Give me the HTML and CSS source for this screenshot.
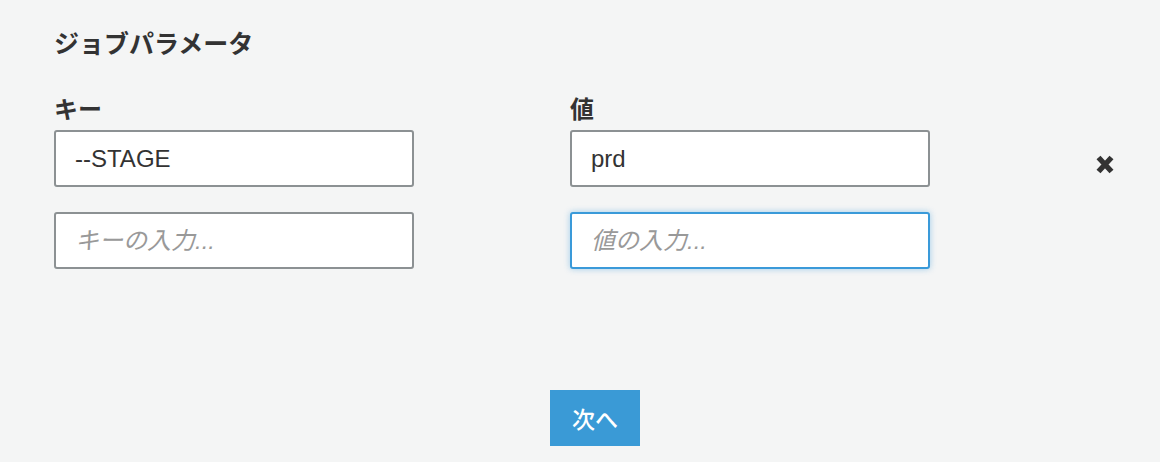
FILE: index.html
```html
<!DOCTYPE html>
<html lang="ja">
  <head>
    <meta charset="UTF-8" />
    <meta name="viewport" content="width=device-width, initial-scale=1.0" />
    <title>ジョブパラメータ</title>
    <link rel="stylesheet" href="styles.css">
  </head>
  <body>
    <main class="page">
      <h2 class="title">ジョブパラメータ</h2>

      <!-- パラメータ -->
      <section class="params">
        <label class="label">キー</label>
        <label class="label">値</label>
        <span></span>

        <input class="field" type="text" value="--STAGE" />
        <input class="field" type="text" value="prd" />
        <button class="remove" type="button" aria-label="削除">
          <svg width="18" height="19" viewBox="0 0 18 19">
            <path d="M2.5 2.5 L15.5 16.5 M15.5 2.5 L2.5 16.5" stroke="#333" stroke-width="5.4" fill="none" />
          </svg>
        </button>

        <input class="field" type="text" placeholder="キーの入力..." />
        <input class="field focus" type="text" placeholder="値の入力..." />
        <span></span>
      </section>

      <div class="actions">
        <button class="next" type="button">次へ</button>
      </div>
    </main>
  </body>
</html>
```

FILE: styles.css
```css
* {
  box-sizing: border-box;
  margin: 0;
  padding: 0;
}

body {
  font-family: "Liberation Sans", "Noto Sans CJK JP", sans-serif;
  background-color: #f4f5f5;
  color: #333;
}

.page {
  padding: 28px 24px 0 54px;
}

.title {
  font-size: 25px;
  font-weight: bold;
  line-height: 32px;
}

.params {
  display: grid;
  grid-template-columns: 360px 360px 1fr;
  column-gap: 156px;
  row-gap: 25px;
  margin-top: 36px;
}

.label {
  font-size: 24px;
  font-weight: bold;
  line-height: 28px;
  margin-bottom: -19px;
}

.field {
  height: 57px;
  border: 2px solid #8c9193;
  border-radius: 3px;
  background-color: white;
  padding: 0 19px;
  font-family: "Liberation Sans", "Noto Sans CJK JP", sans-serif;
  font-size: 24px;
  color: #333;
  outline: none;
}

.field::placeholder {
  color: #999;
  font-style: italic;
}

.field.focus {
  border-color: #3a9ad9;
  box-shadow: 0 0 6px rgba(58, 154, 217, 0.45);
}

.remove {
  align-self: start;
  justify-self: start;
  margin: 25px 0 0 10px;
  border: none;
  background: none;
  display: flex;
  cursor: pointer;
}

.actions {
  display: flex;
  justify-content: center;
  margin-top: 121px;
}

.next {
  width: 90px;
  height: 56px;
  border: none;
  background-color: #3a9ad6;
  color: white;
  font-family: "Noto Sans CJK JP", sans-serif;
  font-size: 23px;
  font-weight: 500;
  cursor: pointer;
}
```
